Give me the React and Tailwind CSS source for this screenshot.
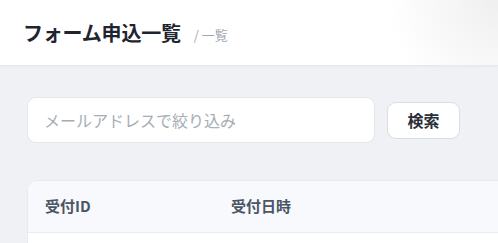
import React from "react";

export default function App() {
  return (
    <div
      className="min-h-screen bg-[#eff1f5] overflow-hidden"
      style={{ fontFamily: '"Noto Sans CJK JP", "Noto Sans", sans-serif' }}
    >
      <header className="relative h-[66px] bg-white border-b border-[#e6e8ec] flex items-center pl-[23px] shadow-[0_1px_2px_rgba(0,0,0,0.03)]">
        <div className="absolute inset-0 pointer-events-none bg-[radial-gradient(circle_at_100%_0%,#efeff0_0%,rgba(255,255,255,0)_22%)]" />
        <h1 className="relative text-[20px] font-bold text-[#1f2530] leading-none tracking-[-0.2px]">フォーム申込一覧</h1>
        <span className="relative ml-[13px] mt-[4px] text-[13px] text-[#a2a9b4] leading-none">/ 一覧</span>
      </header>

      <main className="pl-[27px] pt-[31px]">
        <div className="flex items-center gap-[12px]">
          <input
            type="text"
            placeholder="メールアドレスで絞り込み"
            className="w-[348px] h-[46px] rounded-[9px] border border-[#e3e7ee] bg-white px-[16px] text-[16px] text-[#333] placeholder:text-[#a7adb6] outline-none"
          />
          <button
            type="button"
            className="h-[37px] w-[73px] rounded-[9px] border border-[#d8dee8] bg-white text-[16px] font-bold text-[#2a2f38]"
          >
            検索
          </button>
        </div>

        <div className="mt-[37px] rounded-tl-[10px] border-l border-t border-[#e8ecf2] bg-white overflow-hidden">
          <div className="flex h-[52px] items-center bg-[#f7f9fc] border-b border-[#e8ecf2] text-[15px] font-bold text-[#4b5563]">
            <div className="w-[186px] pl-[17px] box-content">受付ID</div>
            <div>受付日時</div>
          </div>
          <div className="h-[20px] bg-white" />
        </div>
      </main>
    </div>
  );
}
